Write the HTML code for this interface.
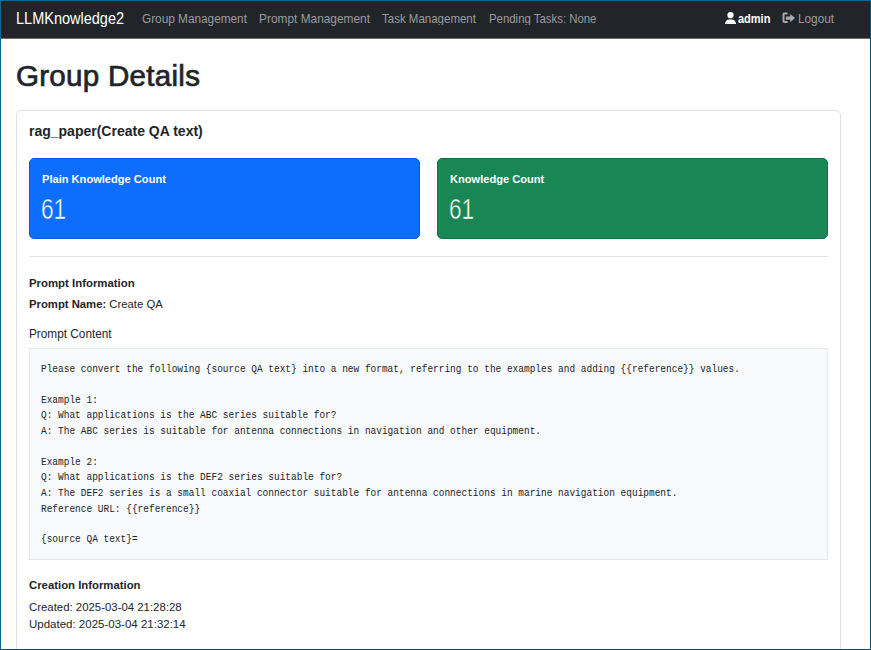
<!DOCTYPE html>
<html>
<head>
<meta charset="utf-8">
<style>
*{box-sizing:border-box;margin:0;padding:0}
html,body{width:871px;height:650px;overflow:hidden;background:#fff}
body{font-family:"Liberation Sans",sans-serif;color:#212529;position:relative}
.frame{position:absolute;left:0;top:0;width:871px;height:650px;border:1px solid #13668f;border-right-color:#0a5075;border-bottom-color:#0a5075;z-index:10}
.nav{position:absolute;left:0;top:0;width:871px;height:39px;background:#212529;border-bottom:1px solid #6a6c6e}
.abs{position:absolute;white-space:nowrap;transform-origin:0 0}
.brand{left:16px;top:9.6px;font-size:14.5px;color:#fff;line-height:16px;transform:scaleY(1.08)}
.link{top:10.6px;font-size:11.8px;color:#9a9c9e;line-height:14px;transform:scaleY(1.06)}
.h1{left:16px;top:59.5px;font-size:29.6px;letter-spacing:0.25px;-webkit-text-stroke:0.7px #212529;line-height:32px;color:#212529}
.card{position:absolute;left:16px;top:110px;width:825px;height:600px;border:1px solid #dfe0e1;border-radius:5px}
.title{left:29px;top:122.3px;font-size:14px;font-weight:bold;line-height:16px;transform:scaleY(1.05)}
.stat{position:absolute;top:158px;width:391px;height:81px;border-radius:5px;color:#fff}
.stat .lab{position:absolute;left:12px;top:13.5px;font-size:11.1px;font-weight:bold;line-height:13px;white-space:nowrap}
.stat .num{position:absolute;left:11px;top:34px;font-size:29px;line-height:32px;transform:scaleX(0.78);transform-origin:0 0}
.hr{position:absolute;left:29px;top:256px;width:799px;height:1px;background:#e3e6e9}
.b{font-weight:bold}
.txt{font-size:11.4px;line-height:14px;left:29px}
.pre{position:absolute;left:29px;top:348px;width:799px;height:212px;background:#f8f9fa;border:1px solid #e7eaed}
.mono{font-family:"Liberation Mono",monospace;font-size:9.48px;line-height:12px;left:41px;color:#212529;transform:scaleY(1.12)}
</style>
</head>
<body>
<div class="nav"></div>
<div class="abs brand">LLMKnowledge2</div>
<div class="abs link" style="left:142px">Group Management</div>
<div class="abs link" style="left:259px;font-size:11.9px">Prompt Management</div>
<div class="abs link" style="left:382px;font-size:11.5px">Task Management</div>
<div class="abs link" style="left:489px;font-size:11.4px">Pending Tasks: None</div>
<svg class="abs" style="left:724.5px;top:11.5px" width="11" height="12.5" viewBox="0 0 448 512" preserveAspectRatio="none"><path fill="#fff" d="M224 256A128 128 0 1 0 224 0a128 128 0 1 0 0 256zm-45.7 48C79.8 304 0 383.8 0 482.3C0 498.7 13.3 512 29.7 512H418.3c16.4 0 29.7-13.3 29.7-29.7C448 383.8 368.2 304 269.7 304H178.3z"/></svg>
<div class="abs link" style="left:738px;color:#fff;font-weight:bold;font-size:11px;top:10.6px;transform:scaleY(1.1)">admin</div>
<svg class="abs" style="left:780px;top:10px" width="18" height="16" viewBox="0 0 18 16"><path fill="#a8aaac" d="M7.6 2.5H4.4Q2.5 2.5 2.5 4.4V11.1Q2.5 13 4.4 13H7.6V11.1H4.6Q4.5 11.1 4.5 11V4.5Q4.5 4.4 4.6 4.4H7.6Z"/><path fill="#a8aaac" d="M5.9 6.6H10.2V3.9L15.1 8.1L10.2 12.2V9.8H5.9Z"/></svg>
<div class="abs link" style="left:798px">Logout</div>

<div class="abs h1">Group Details</div>
<div class="card"></div>
<div class="abs title">rag_paper(Create QA text)</div>
<div class="stat" style="left:29px;background:#0d6efd;border:1px solid #0b5bd1"><div class="lab">Plain Knowledge Count</div><div class="num" style="-webkit-text-stroke:0.5px #0d6efd">61</div></div>
<div class="stat" style="left:437px;background:#198754;border:1px solid #157046"><div class="lab">Knowledge Count</div><div class="num" style="-webkit-text-stroke:0.5px #198754">61</div></div>
<div class="hr"></div>
<div class="abs txt b" style="top:275.7px;font-size:11.4px">Prompt Information</div>
<div class="abs txt" style="top:296.7px;font-size:11.3px"><span class="b">Prompt Name:</span> Create QA</div>
<div class="abs txt" style="top:326.3px;font-size:11.8px;transform:scaleY(1.07)">Prompt Content</div>
<div class="pre"></div>
<div class="abs mono" style="top:363px">Please convert the following {source QA text} into a new format, referring to the examples and adding {{reference}} values.</div>
<div class="abs mono" style="top:394px">Example 1:</div>
<div class="abs mono" style="top:409px">Q: What applications is the ABC series suitable for?</div>
<div class="abs mono" style="top:425px">A: The ABC series is suitable for antenna connections in navigation and other equipment.</div>
<div class="abs mono" style="top:456px">Example 2:</div>
<div class="abs mono" style="top:471px">Q: What applications is the DEF2 series suitable for?</div>
<div class="abs mono" style="top:487px">A: The DEF2 series is a small coaxial connector suitable for antenna connections in marine navigation equipment.</div>
<div class="abs mono" style="top:503px">Reference URL: {{reference}}</div>
<div class="abs mono" style="top:533px">{source QA text}=</div>
<div class="abs txt b" style="top:578px;font-size:11.35px">Creation Information</div>
<div class="abs txt" style="top:600px">Created: 2025-03-04 21:28:28</div>
<div class="abs txt" style="top:617px;font-size:11.5px">Updated: 2025-03-04 21:32:14</div>
<div class="frame"></div>
</body>
</html>
